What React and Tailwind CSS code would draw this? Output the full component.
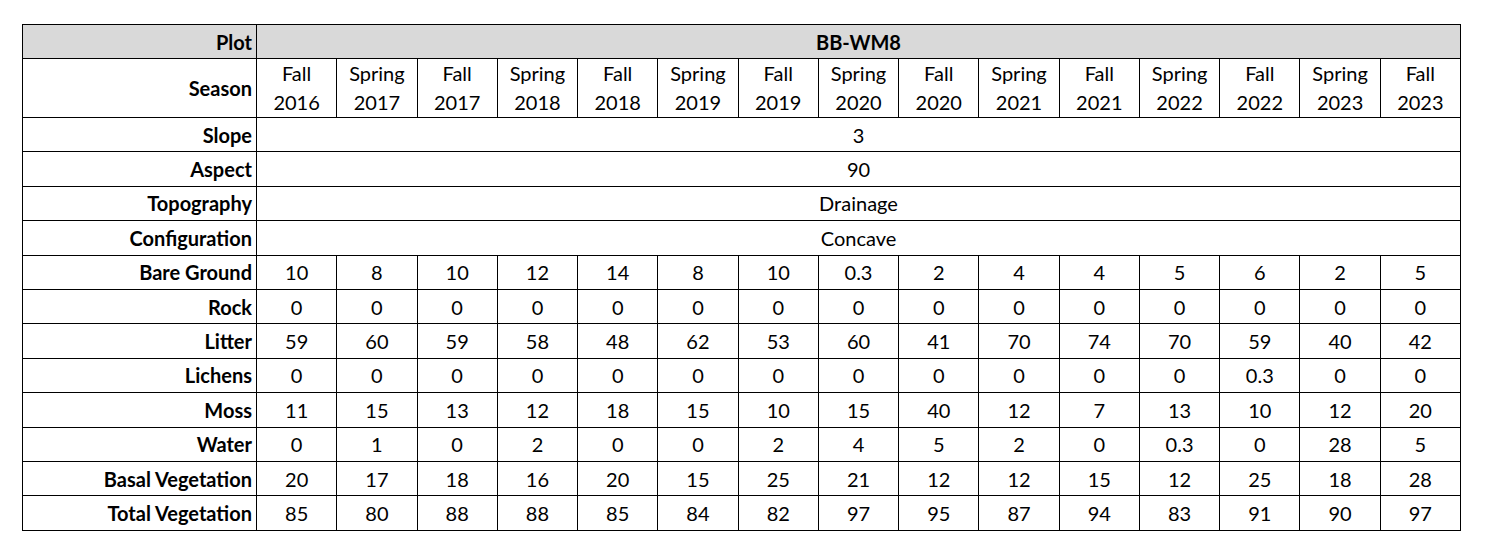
const seasons = [
  ["Fall", "2016"], ["Spring", "2017"], ["Fall", "2017"], ["Spring", "2018"], ["Fall", "2018"],
  ["Spring", "2019"], ["Fall", "2019"], ["Spring", "2020"], ["Fall", "2020"], ["Spring", "2021"],
  ["Fall", "2021"], ["Spring", "2022"], ["Fall", "2022"], ["Spring", "2023"], ["Fall", "2023"],
];

const spanRows = [
  ["Slope", "3"],
  ["Aspect", "90"],
  ["Topography", "Drainage"],
  ["Configuration", "Concave"],
];

const dataRows = [
  ["Bare Ground", ["10", "8", "10", "12", "14", "8", "10", "0.3", "2", "4", "4", "5", "6", "2", "5"]],
  ["Rock", ["0", "0", "0", "0", "0", "0", "0", "0", "0", "0", "0", "0", "0", "0", "0"]],
  ["Litter", ["59", "60", "59", "58", "48", "62", "53", "60", "41", "70", "74", "70", "59", "40", "42"]],
  ["Lichens", ["0", "0", "0", "0", "0", "0", "0", "0", "0", "0", "0", "0", "0.3", "0", "0"]],
  ["Moss", ["11", "15", "13", "12", "18", "15", "10", "15", "40", "12", "7", "13", "10", "12", "20"]],
  ["Water", ["0", "1", "0", "2", "0", "0", "2", "4", "5", "2", "0", "0.3", "0", "28", "5"]],
  ["Basal Vegetation", ["20", "17", "18", "16", "20", "15", "25", "21", "12", "12", "15", "12", "25", "18", "28"]],
  ["Total Vegetation", ["85", "80", "88", "88", "85", "84", "82", "97", "95", "87", "94", "83", "91", "90", "97"]],
];

const label = "border border-black text-right pr-[4px] font-bold";
const cell = "border border-black text-center";

export default function App() {
  return (
    <div className="w-[1507px] h-[555px] bg-white pt-[24px] pl-[22px] font-['Lato',sans-serif] text-[20px] text-black leading-none">
      <table className="table-fixed border-collapse w-[1439px]">
        <colgroup>
          <col className="w-[234px]" />
          {seasons.map((_, i) => (
            <col key={i} />
          ))}
        </colgroup>
        <tbody>
          <tr className="h-[34px] bg-[#d9d9d9]">
            <td className={label}>Plot</td>
            <td colSpan={15} className={cell + " font-bold"}>BB-WM8</td>
          </tr>
          <tr className="h-[57px]">
            <td className={label}>Season</td>
            {seasons.map(([s, y], i) => (
              <td key={i} className={cell + " leading-[29px]"}>
                <div>{s}</div>
                <div>{y}</div>
              </td>
            ))}
          </tr>
          {spanRows.map(([l, v]) => (
            <tr key={l} className="h-[34.4px]">
              <td className={label}>{l}</td>
              <td colSpan={15} className={cell}>{v}</td>
            </tr>
          ))}
          {dataRows.map(([l, vals]) => (
            <tr key={l} className="h-[34.4px]">
              <td className={label}>{l}</td>
              {vals.map((v, i) => (
                <td key={i} className={cell}>{v}</td>
              ))}
            </tr>
          ))}
        </tbody>
      </table>
    </div>
  );
}
